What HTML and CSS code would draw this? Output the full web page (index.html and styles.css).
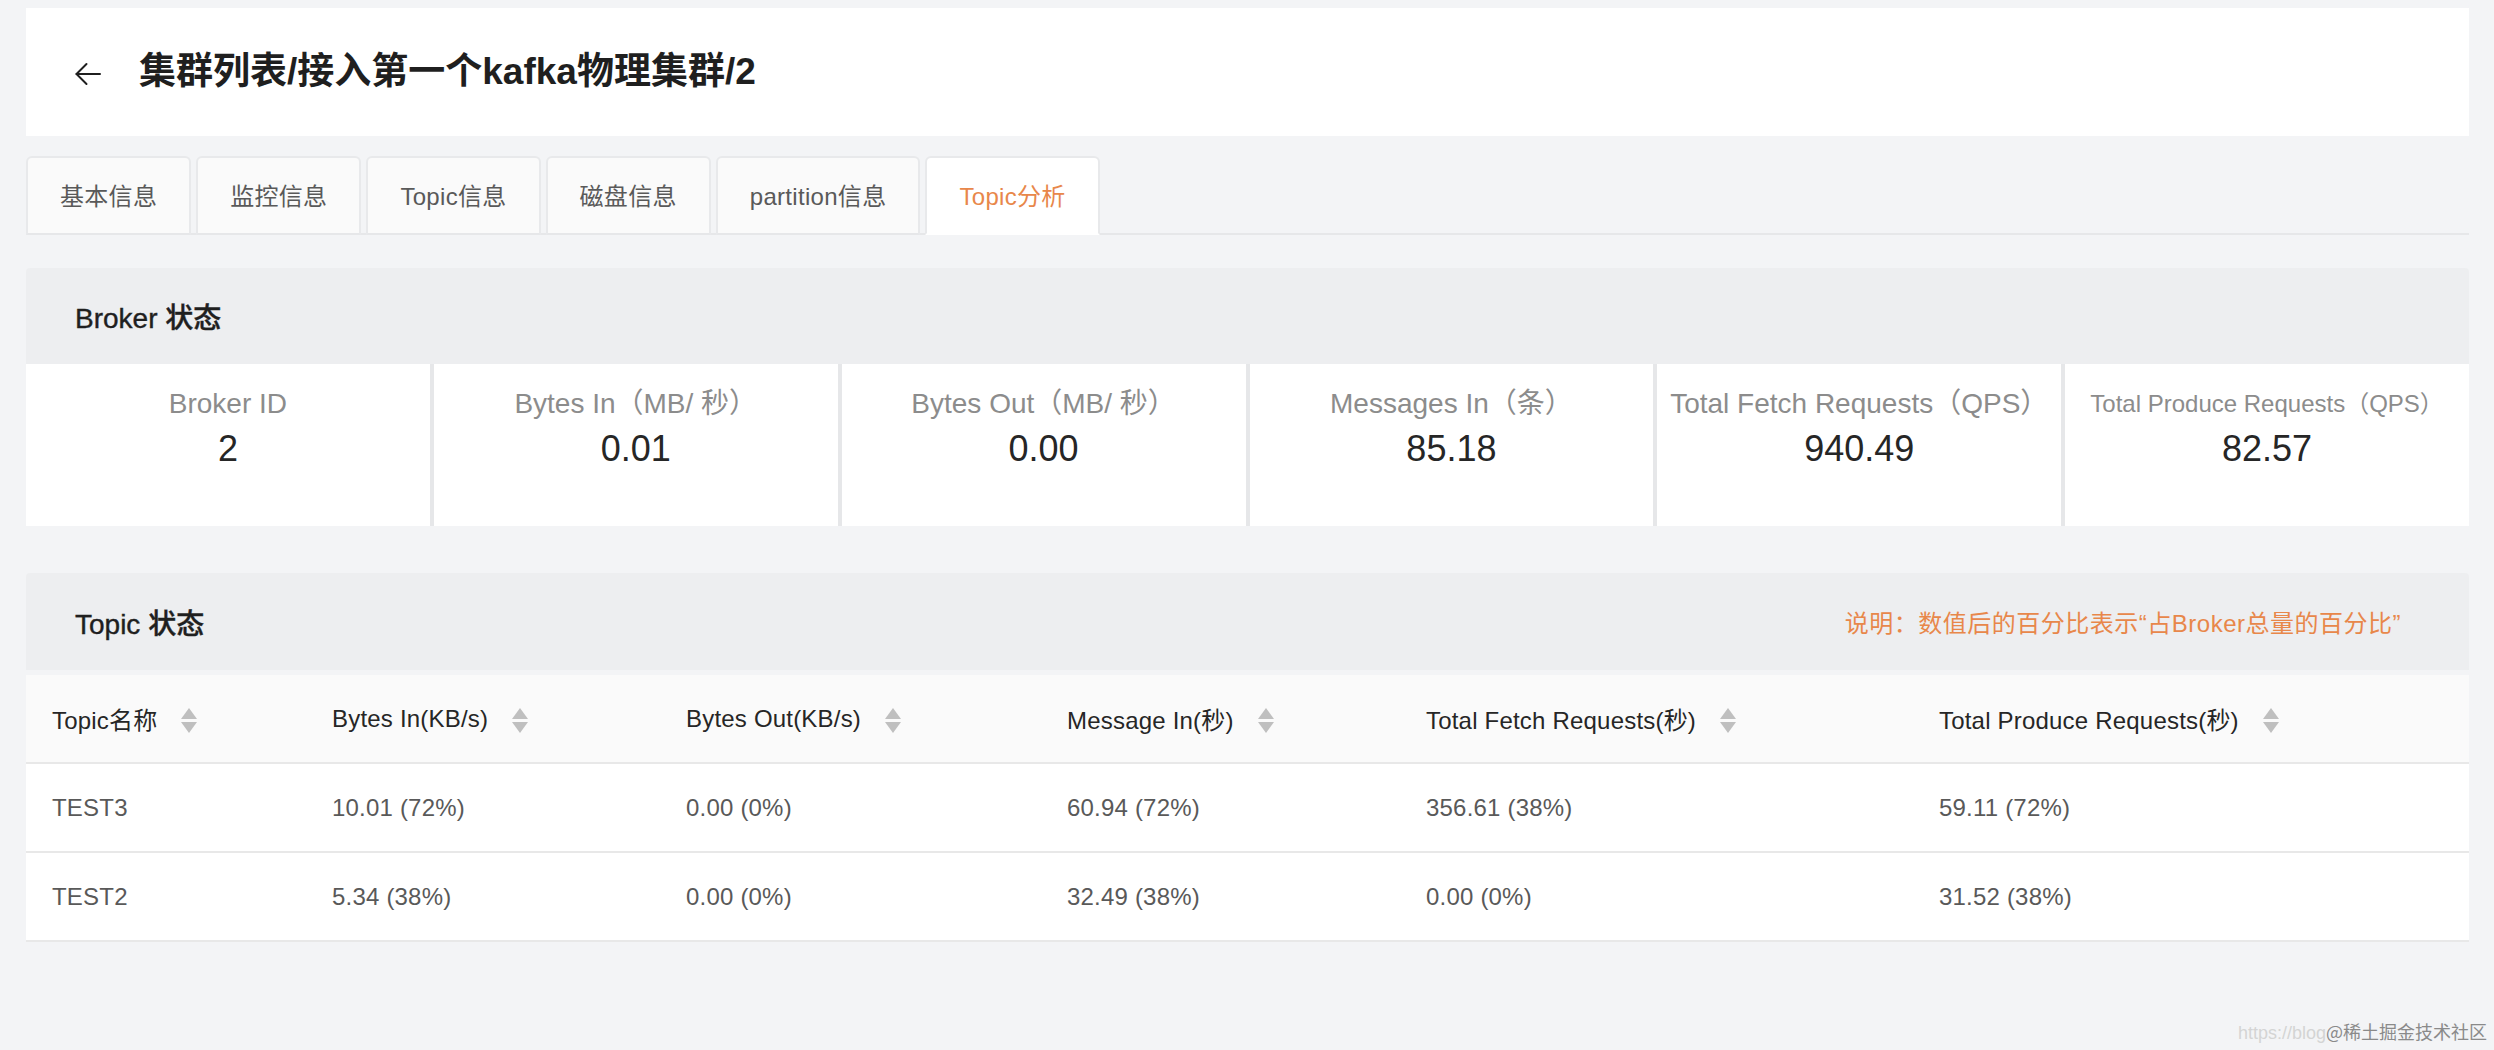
FILE: index.html
```html
<!DOCTYPE html>
<html lang="zh-CN">
<head>
<meta charset="utf-8">
<title>Topic分析</title>
<link rel="stylesheet" href="styles.css">
</head>
<body>
<div class="page">
  <header class="page-header">
    <span class="back" aria-label="返回">
      <svg viewBox="0 0 28 24" width="28" height="24" fill="none" stroke="#1f1f1f" stroke-width="2" stroke-linecap="round" stroke-linejoin="round">
        <path d="M26 12H2.5"/>
        <path d="M12.5 2L2.5 12l10 10"/>
      </svg>
    </span>
    <h1 class="title">集群列表/接入第一个kafka物理集群/2</h1>
  </header>

  <nav class="tabs">
    <div class="tab">基本信息</div>
    <div class="tab">监控信息</div>
    <div class="tab">Topic信息</div>
    <div class="tab">磁盘信息</div>
    <div class="tab">partition信息</div>
    <div class="tab tab-active">Topic分析</div>
  </nav>

  <section class="card broker-card">
    <div class="card-head">
      <span class="card-title">Broker 状态</span>
    </div>
    <div class="stats">
      <div class="stat">
        <div class="stat-label">Broker ID</div>
        <div class="stat-value">2</div>
      </div>
      <div class="stat">
        <div class="stat-label">Bytes In（MB/ 秒）</div>
        <div class="stat-value">0.01</div>
      </div>
      <div class="stat">
        <div class="stat-label">Bytes Out（MB/ 秒）</div>
        <div class="stat-value">0.00</div>
      </div>
      <div class="stat">
        <div class="stat-label">Messages In（条）</div>
        <div class="stat-value">85.18</div>
      </div>
      <div class="stat">
        <div class="stat-label">Total Fetch Requests（QPS）</div>
        <div class="stat-value">940.49</div>
      </div>
      <div class="stat">
        <div class="stat-label stat-label-sm">Total Produce Requests（QPS）</div>
        <div class="stat-value">82.57</div>
      </div>
    </div>
  </section>

  <section class="card topic-card">
    <div class="card-head">
      <span class="card-title">Topic 状态</span>
      <span class="note">说明：数值后的百分比表示“占Broker总量的百分比”</span>
    </div>
    <table class="topic-table">
      <colgroup>
        <col class="c1"><col class="c2"><col class="c3"><col class="c4"><col class="c5"><col class="c6">
      </colgroup>
      <thead>
        <tr>
          <th><span class="th-inner">Topic名称<span class="sorter"><i class="up"></i><i class="down"></i></span></span></th>
          <th><span class="th-inner">Bytes In(KB/s)<span class="sorter"><i class="up"></i><i class="down"></i></span></span></th>
          <th><span class="th-inner">Bytes Out(KB/s)<span class="sorter"><i class="up"></i><i class="down"></i></span></span></th>
          <th><span class="th-inner">Message In(秒)<span class="sorter"><i class="up"></i><i class="down"></i></span></span></th>
          <th><span class="th-inner">Total Fetch Requests(秒)<span class="sorter"><i class="up"></i><i class="down"></i></span></span></th>
          <th><span class="th-inner">Total Produce Requests(秒)<span class="sorter"><i class="up"></i><i class="down"></i></span></span></th>
        </tr>
      </thead>
      <tbody>
        <tr>
          <td>TEST3</td>
          <td>10.01 (72%)</td>
          <td>0.00 (0%)</td>
          <td>60.94 (72%)</td>
          <td>356.61 (38%)</td>
          <td>59.11 (72%)</td>
        </tr>
        <tr>
          <td>TEST2</td>
          <td>5.34 (38%)</td>
          <td>0.00 (0%)</td>
          <td>32.49 (38%)</td>
          <td>0.00 (0%)</td>
          <td>31.52 (38%)</td>
        </tr>
      </tbody>
    </table>
  </section>
</div>
<div class="watermark"><span class="wm-url">https://blog</span>@稀土掘金技术社区</div>
</body>
</html>
```

FILE: styles.css
```css
* {
  box-sizing: border-box;
}

html, body {
  margin: 0;
  padding: 0;
}

body {
  background: #f3f4f6;
  font-family: "Liberation Sans", "Noto Sans CJK SC", sans-serif;
  color: #262626;
  width: 2494px;
  height: 1050px;
  overflow: hidden;
  position: relative;
}

.page {
  padding: 8px 25px 0 26px;
}

/* header */
.page-header {
  height: 128px;
  background: #ffffff;
  display: flex;
  align-items: center;
  padding-left: 48px;
}

.back {
  display: flex;
  width: 28px;
  height: 24px;
  margin-top: 4px;
  margin-right: 37px;
}

.title {
  margin: 0;
  font-size: 37px;
  font-weight: 600;
  color: #1f1f1f;
  line-height: 48px;
}

/* tabs */
.tabs {
  margin-top: 20px;
  display: flex;
  align-items: flex-end;
  border-bottom: 2px solid #e6e7e9;
  height: 79px;
}

.tab {
  height: 79px;
  margin-bottom: -2px;
  margin-right: 5px;
  padding: 0 32px;
  display: flex;
  align-items: center;
  padding-bottom: 2px;
  background: #fafafa;
  border: 2px solid #e8e9eb;
  border-bottom: 2px solid #e6e7e9;
  border-radius: 6px 6px 0 0;
  font-size: 24px;
  color: #595959;
  letter-spacing: 0.3px;
}

.tab-active {
  background: #ffffff;
  border-bottom-color: #ffffff;
  color: #e8874a;
}

/* cards */
.broker-card {
  margin-top: 33px;
}

.topic-card {
  margin-top: 47px;
}

.card-head {
  display: flex;
  align-items: center;
  justify-content: space-between;
  background: #edeef0;
  border-radius: 4px 4px 0 0;
  padding: 0 68px 0 49px;
}

.broker-card .card-head {
  height: 96px;
}

.topic-card .card-head {
  height: 97px;
}

.card-title {
  font-size: 28px;
  font-weight: 500;
  color: #1f1f1f;
  -webkit-text-stroke: 0.4px #1f1f1f;
}

.note {
  font-size: 24px;
  color: #e8874a;
  letter-spacing: 0.5px;
}

/* broker stats */
.stats {
  display: grid;
  grid-template-columns: repeat(6, 1fr);
  gap: 4px;
  background: #e6e7e9;
}

.stat {
  background: #ffffff;
  height: 162px;
  padding-top: 20px;
  text-align: center;
}

.stat-label {
  font-size: 28px;
  line-height: 40px;
  color: #8c8c8c;
  white-space: nowrap;
}

.stat-label-sm {
  font-size: 24px;
}

.stat-value {
  font-size: 36px;
  line-height: 50px;
  color: #262626;
}

/* table */
.topic-table {
  margin-top: 5px;
  width: 100%;
  border-collapse: collapse;
  table-layout: fixed;
  background: #ffffff;
}

.c1 { width: 280px; }
.c2 { width: 354px; }
.c3 { width: 381px; }
.c4 { width: 359px; }
.c5 { width: 513px; }

.topic-table th {
  height: 88px;
  background: #fafafa;
  text-align: left;
  font-weight: 400;
  font-size: 24px;
  color: #262626;
  padding: 0 0 0 26px;
  border-bottom: 2px solid #e8e8e8;
  letter-spacing: 0.2px;
}

.th-inner {
  display: inline-flex;
  align-items: center;
}

.sorter {
  display: inline-flex;
  flex-direction: column;
  gap: 3px;
  margin-left: 24px;
  margin-top: 4px;
}

.sorter .up,
.sorter .down {
  display: block;
  width: 0;
  height: 0;
  border-left: 8px solid transparent;
  border-right: 8px solid transparent;
}

.sorter .up {
  border-bottom: 11px solid #bfbfbf;
}

.sorter .down {
  border-top: 11px solid #bfbfbf;
}

.topic-table td {
  height: 89px;
  padding: 0 0 0 26px;
  font-size: 24px;
  color: #595959;
  border-bottom: 2px solid #e8e8e8;
  letter-spacing: 0.2px;
}

/* watermark */
.watermark {
  position: absolute;
  right: 7px;
  bottom: 5px;
  font-size: 18px;
  line-height: 24px;
  color: #8a8a8a;
  font-family: "Noto Sans CJK SC", sans-serif;
}

.wm-url {
  color: #d4d4d4;
  font-family: "Liberation Sans", sans-serif;
}
```
